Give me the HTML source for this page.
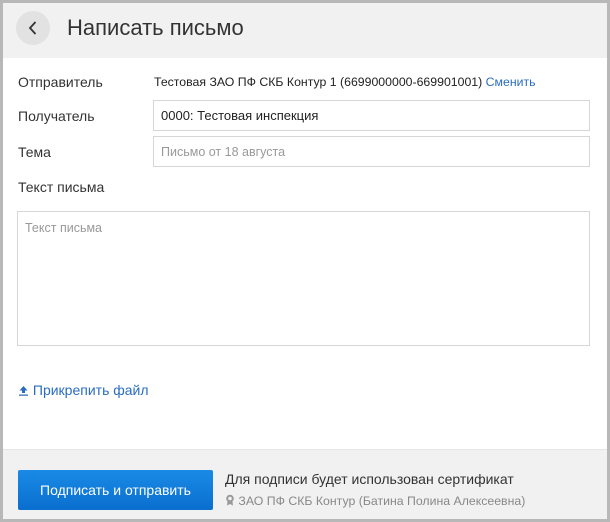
<!DOCTYPE html>
<html><head><meta charset="utf-8"><style>
*{box-sizing:border-box;margin:0;padding:0}
body{width:610px;height:522px;background:#b8b8b8;font-family:"Liberation Sans",sans-serif;position:relative;overflow:hidden}
.card{position:absolute;left:3px;top:3px;width:604px;height:516px;background:#fff}
.hdr{position:absolute;left:0;top:0;width:604px;height:55px;background:#f1f1f1}
.back{position:absolute;left:13px;top:8px;width:34px;height:34px;border-radius:50%;background:#e2e2e2}
.t{position:absolute;white-space:nowrap}
.inp{position:absolute;border:1px solid #d6d6d6;background:#fff}
.ftr{position:absolute;left:0;top:446px;width:604px;height:70px;background:#f1f1f1;border-top:1px solid #e6e6e6}
.btn{position:absolute;left:15px;top:20px;width:195px;height:40px;background:linear-gradient(#1a8ae6,#0a6fcf);border-radius:2px;color:#fff;font-size:14px;text-align:center;line-height:40px}
</style></head><body>
<div class="card">
<div class="hdr">
<div class="back"><svg width="34" height="34" viewBox="0 0 34 34"><path d="M19.5 11 L14 17 L19.5 23" fill="none" stroke="#333" stroke-width="1.8"/></svg></div>
<div class="t" style="left:64px;top:12px;font-size:22px;color:#333">Написать письмо</div>
</div>
<div class="t" style="left:15px;top:71px;font-size:14px;color:#333">Отправитель</div>
<div class="t" style="left:151px;top:72px;font-size:12.3px;color:#222">Тестовая ЗАО ПФ СКБ Контур 1 (6699000000-669901001) <span style="color:#2a6cc2">Сменить</span></div>
<div class="t" style="left:15px;top:105px;font-size:14px;color:#333">Получатель</div>
<div class="inp" style="left:150px;top:97px;width:437px;height:31px"><span class="t" style="left:7px;top:7px;font-size:13px;color:#222">0000: Тестовая инспекция</span></div>
<div class="t" style="left:15px;top:141px;font-size:14px;color:#333">Тема</div>
<div class="inp" style="left:150px;top:133px;width:437px;height:31px"><span class="t" style="left:7px;top:8px;font-size:12.5px;color:#999">Письмо от 18 августа</span></div>
<div class="t" style="left:15px;top:176px;font-size:14px;color:#333">Текст письма</div>
<div class="inp" style="left:14px;top:208px;width:573px;height:135px"><span class="t" style="left:7px;top:9px;font-size:12.5px;color:#999">Текст письма</span></div>
<div class="t" style="left:15px;top:379px;font-size:14px;color:#2a6cc2"><svg width="11" height="11" viewBox="0 0 11 11" style="vertical-align:-1px"><path d="M5.5 1 L1.5 5.5 H4 V8 H7 V5.5 H9.5Z M1 9.5 H10 V10.8 H1Z" fill="#2a6cc2"/></svg> Прикрепить файл</div>
<div class="ftr">
<div class="btn">Подписать и отправить</div>
<div class="t" style="left:222px;top:21px;font-size:14px;color:#333">Для подписи будет использован сертификат</div>
<div class="t" style="left:222px;top:44px;font-size:12.3px;color:#888"><svg width="10" height="12" viewBox="0 0 10 12" style="vertical-align:-1px"><circle cx="5" cy="4.5" r="3.8" fill="#999"/><circle cx="5" cy="4.5" r="1.8" fill="#f1f1f1"/><path d="M2.5 7.5 L2 11.5 L5 10 L8 11.5 L7.5 7.5Z" fill="#999"/></svg> ЗАО ПФ СКБ Контур (Батина Полина Алексеевна)</div>
</div>
</div>
</body></html>
